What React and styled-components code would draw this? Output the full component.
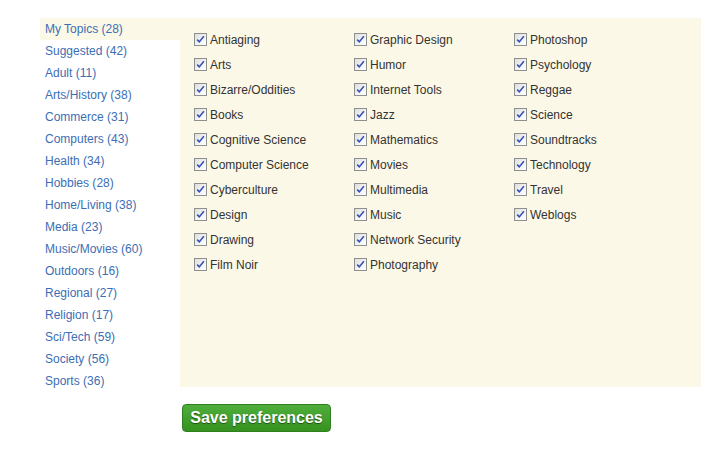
import React from 'react';
import styled, { createGlobalStyle } from 'styled-components';

const categories = [
  { name: 'My Topics', count: 28 },
  { name: 'Suggested', count: 42 },
  { name: 'Adult', count: 11 },
  { name: 'Arts/History', count: 38 },
  { name: 'Commerce', count: 31 },
  { name: 'Computers', count: 43 },
  { name: 'Health', count: 34 },
  { name: 'Hobbies', count: 28 },
  { name: 'Home/Living', count: 38 },
  { name: 'Media', count: 23 },
  { name: 'Music/Movies', count: 60 },
  { name: 'Outdoors', count: 16 },
  { name: 'Regional', count: 27 },
  { name: 'Religion', count: 17 },
  { name: 'Sci/Tech', count: 59 },
  { name: 'Society', count: 56 },
  { name: 'Sports', count: 36 },
];

const topics = [
  'Antiaging', 'Arts', 'Bizarre/Oddities', 'Books', 'Cognitive Science',
  'Computer Science', 'Cyberculture', 'Design', 'Drawing', 'Film Noir',
  'Graphic Design', 'Humor', 'Internet Tools', 'Jazz', 'Mathematics',
  'Movies', 'Multimedia', 'Music', 'Network Security', 'Photography',
  'Photoshop', 'Psychology', 'Reggae', 'Science', 'Soundtracks',
  'Technology', 'Travel', 'Weblogs',
];

const GlobalStyle = createGlobalStyle`
  body {
    margin: 0;
    background: #ffffff;
    font-family: "Liberation Sans", Arial, sans-serif;
  }
`;

const CheckMark = () => (
  <svg width="9" height="9" viewBox="0 0 9 9">
    <path d="M1.2 4.6 L3.3 6.9 L7.9 1.3" fill="none" stroke="#3550b8" strokeWidth="1.6" />
  </svg>
);

const App = () => {
  return (
    <Page>
      <GlobalStyle />
      <Main>
        <Sidebar>
          {categories.map((cat, i) => (
            <CategoryItem key={cat.name} $active={i === 0}>
              {cat.name} ({cat.count})
            </CategoryItem>
          ))}
        </Sidebar>
        <Panel>
          <TopicGrid>
            {topics.map((topic) => (
              <TopicLabel key={topic}>
                <Box>
                  <CheckMark />
                </Box>
                {topic}
              </TopicLabel>
            ))}
          </TopicGrid>
        </Panel>
      </Main>
      <Footer>
        <SaveButton>Save preferences</SaveButton>
      </Footer>
    </Page>
  );
};

const Page = styled.div`
  padding: 18px 0 0 40px;
`;

const Main = styled.div`
  display: flex;
  align-items: flex-start;
`;

const Sidebar = styled.ul`
  width: 140px;
  margin: 0;
  padding: 0;
  list-style: none;
  flex-shrink: 0;
`;

const CategoryItem = styled.li`
  height: 22px;
  line-height: 22px;
  padding-left: 5px;
  font-size: 12px;
  color: #3b6eb4;
  background: ${(p) => (p.$active ? '#fcf8e7' : 'transparent')};
  cursor: pointer;
`;

const Panel = styled.div`
  flex: 1;
  height: 369px;
  box-sizing: border-box;
  padding: 9px 0 0 14px;
  background: #fcf8e7;
`;

const TopicGrid = styled.div`
  display: grid;
  grid-auto-flow: column;
  grid-template-rows: repeat(10, 25px);
  grid-template-columns: repeat(3, 160px);
`;

const TopicLabel = styled.label`
  display: flex;
  align-items: center;
  font-size: 12px;
  color: #333333;
`;

const Box = styled.span`
  width: 13px;
  height: 13px;
  box-sizing: border-box;
  margin: -1px 3px 0 0;
  border: 1px solid #8e8f8f;
  background: linear-gradient(135deg, #dedede 0%, #f4f4f4 60%, #ffffff 100%);
  display: flex;
  align-items: center;
  justify-content: center;
`;

const Footer = styled.div`
  padding: 12px 0 0 142px;
`;

const SaveButton = styled.button`
  display: block;
  height: 28px;
  width: 149px;
  padding: 0;
  border: 1px solid #2f7f22;
  border-radius: 4px;
  background: linear-gradient(#4fae3c, #35921f);
  color: #ffffff;
  font-family: "Liberation Sans", Arial, sans-serif;
  font-size: 16px;
  font-weight: bold;
  text-shadow: 0 1px 1px #1d4d14;
  cursor: pointer;
`;

export default App;
